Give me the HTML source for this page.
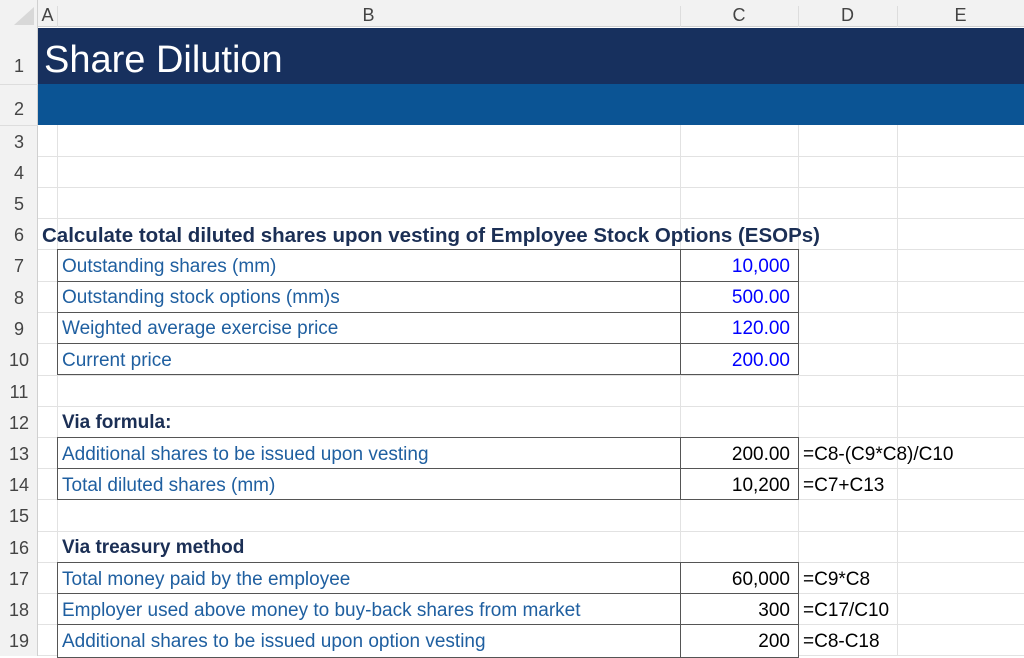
<!DOCTYPE html>
<html><head><meta charset="utf-8"><style>
*{margin:0;padding:0;box-sizing:border-box}
body{width:1024px;height:656px;overflow:hidden;background:#fff;position:relative;font-family:"Liberation Sans",sans-serif}
.a{position:absolute}
.h{background:#f2f2f2}
.gv{position:absolute;width:1px;background:#e2e2e2;top:125px;height:531px}
.gh{position:absolute;height:1px;background:#e2e2e2;left:38px;right:0}
.rn{position:absolute;left:0;width:38px;text-align:center;font-size:18px;color:#444;line-height:31px}
.t{position:absolute;font-size:19px;line-height:31px;white-space:nowrap;color:#1f5fa0}
.v{position:absolute;font-size:19px;line-height:31px;white-space:nowrap;text-align:right;left:680px;width:110px}
.b{font-weight:bold;color:#1b2f55}
.f{position:absolute;left:803px;font-size:19px;line-height:31px;color:#000;white-space:nowrap}
.bl{position:absolute;left:57px;width:742px;height:1px;background:#555}
.vl{position:absolute;left:680px;width:1px;background:#555}
.ch{position:absolute;top:0;line-height:30px;text-align:center;color:#444;font-size:18px}
</style></head><body>
<div class="a h" style="left:0;top:0;width:1024px;height:27px;border-bottom:1px solid #d0d0d0"></div>
<div class="a h" style="left:0;top:0;width:38px;height:656px;border-right:1px solid #d0d0d0"></div>
<div class="a" style="left:14px;top:7px;width:0;height:0;border-left:20px solid transparent;border-bottom:18px solid #d8d8d8"></div>
<div class="ch" style="left:38px;width:19px">A</div>
<div class="ch" style="left:57px;width:623px">B</div>
<div class="ch" style="left:680px;width:118px">C</div>
<div class="ch" style="left:798px;width:99px">D</div>
<div class="ch" style="left:897px;width:127px">E</div>
<div class="a" style="left:57px;top:6px;width:1px;height:21px;background:#ddd"></div>
<div class="a" style="left:680px;top:6px;width:1px;height:21px;background:#ddd"></div>
<div class="a" style="left:798px;top:6px;width:1px;height:21px;background:#ddd"></div>
<div class="a" style="left:897px;top:6px;width:1px;height:21px;background:#ddd"></div>

<div class="a" style="left:38px;top:28px;width:986px;height:56px;background:#17305e"></div>
<div class="a" style="left:38px;top:84px;width:986px;height:41px;background:#0b5494"></div>
<div class="a" style="left:44px;top:37px;font-size:38px;color:#fff;line-height:46px">Share Dilution</div>

<div class="gv" style="left:57px"></div>
<div class="gv" style="left:680px"></div>
<div class="gv" style="left:798px"></div>
<div class="gv" style="left:897px"></div>
<div class="gh" style="top:156px"></div><div class="gh" style="top:187px"></div><div class="gh" style="top:218px"></div>
<div class="gh" style="top:249px"></div><div class="gh" style="top:281px"></div><div class="gh" style="top:312px"></div>
<div class="gh" style="top:343px"></div><div class="gh" style="top:375px"></div><div class="gh" style="top:406px"></div>
<div class="gh" style="top:437px"></div><div class="gh" style="top:468px"></div><div class="gh" style="top:499px"></div>
<div class="gh" style="top:531px"></div><div class="gh" style="top:562px"></div><div class="gh" style="top:593px"></div>
<div class="gh" style="top:624px"></div><div class="gh" style="top:655px"></div>
<div class="a" style="left:0;top:84px;width:38px;height:1px;background:#ddd"></div>
<div class="a" style="left:0;top:125px;width:38px;height:1px;background:#ddd"></div>

<div class="rn" style="top:51px">1</div>
<div class="rn" style="top:94px">2</div>
<div class="rn" style="top:127px">3</div><div class="rn" style="top:158px">4</div><div class="rn" style="top:189px">5</div>
<div class="rn" style="top:220px">6</div><div class="rn" style="top:251px">7</div><div class="rn" style="top:283px">8</div>
<div class="rn" style="top:314px">9</div><div class="rn" style="top:345px">10</div><div class="rn" style="top:377px">11</div>
<div class="rn" style="top:408px">12</div><div class="rn" style="top:439px">13</div><div class="rn" style="top:470px">14</div>
<div class="rn" style="top:501px">15</div><div class="rn" style="top:533px">16</div><div class="rn" style="top:564px">17</div>
<div class="rn" style="top:595px">18</div><div class="rn" style="top:626px">19</div>

<div class="a" style="left:57px;top:249px;width:742px;height:126px;background:#fff;border:1px solid #555"></div>
<div class="bl" style="top:281px"></div><div class="bl" style="top:312px"></div><div class="bl" style="top:343px"></div>
<div class="vl" style="top:249px;height:126px"></div>
<div class="a" style="left:57px;top:437px;width:742px;height:63px;background:#fff;border:1px solid #555"></div>
<div class="bl" style="top:468px"></div>
<div class="vl" style="top:437px;height:63px"></div>
<div class="a" style="left:57px;top:562px;width:742px;height:96px;background:#fff;border:1px solid #555"></div>
<div class="bl" style="top:593px"></div><div class="bl" style="top:624px"></div>
<div class="vl" style="top:562px;height:96px"></div>

<div class="t b" style="left:42px;top:220px;font-size:20.5px">Calculate total diluted shares upon vesting of Employee Stock Options (ESOPs)</div>
<div class="t" style="left:62px;top:251px">Outstanding shares (mm)</div>
<div class="t" style="left:62px;top:282px">Outstanding stock options (mm)s</div>
<div class="t" style="left:62px;top:313px">Weighted average exercise price</div>
<div class="t" style="left:62px;top:345px">Current price</div>
<div class="v" style="top:251px;color:#0000ff">10,000</div>
<div class="v" style="top:282px;color:#0000ff">500.00</div>
<div class="v" style="top:313px;color:#0000ff">120.00</div>
<div class="v" style="top:345px;color:#0000ff">200.00</div>

<div class="t b" style="left:62px;top:407px">Via formula:</div>
<div class="t" style="left:62px;top:439px">Additional shares to be issued upon vesting</div>
<div class="t" style="left:62px;top:470px">Total diluted shares (mm)</div>
<div class="v" style="top:439px">200.00</div>
<div class="v" style="top:470px">10,200</div>
<div class="f" style="top:439px">=C8-(C9*C8)/C10</div>
<div class="f" style="top:470px">=C7+C13</div>

<div class="t b" style="left:62px;top:532px">Via treasury method</div>
<div class="t" style="left:62px;top:564px">Total money paid by the employee</div>
<div class="t" style="left:62px;top:595px">Employer used above money to buy-back shares from market</div>
<div class="t" style="left:62px;top:626px">Additional shares to be issued upon option vesting</div>
<div class="v" style="top:564px">60,000</div>
<div class="v" style="top:595px">300</div>
<div class="v" style="top:626px">200</div>
<div class="f" style="top:564px">=C9*C8</div>
<div class="f" style="top:595px">=C17/C10</div>
<div class="f" style="top:626px">=C8-C18</div>
</body></html>
